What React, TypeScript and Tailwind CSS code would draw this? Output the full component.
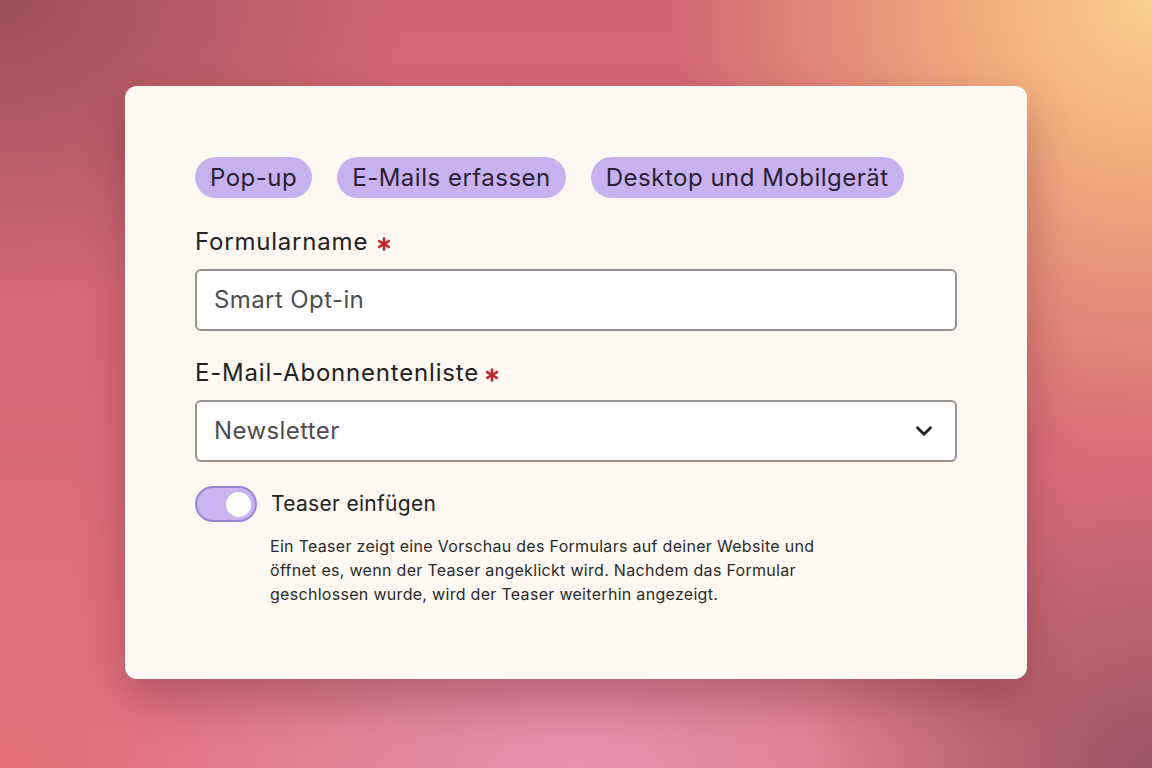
import { ChevronDown } from 'lucide-react';

const chips = ['Pop-up', 'E-Mails erfassen', 'Desktop und Mobilgerät'];

function Required() {
  return (
    <svg width="14" height="14" viewBox="0 0 14 14" className="text-[#c0262d] mt-[3px] shrink-0">
      <g stroke="currentColor" strokeWidth="2.6" strokeLinecap="round">
        <line x1="7" y1="1.5" x2="7" y2="12.5" />
        <line x1="2.2" y1="4.2" x2="11.8" y2="9.8" />
        <line x1="2.2" y1="9.8" x2="11.8" y2="4.2" />
      </g>
    </svg>
  );
}

export default function App() {
  return (
    <div
      className="w-full h-screen flex items-start justify-center pt-[86px] font-['Inter',sans-serif] bg-[radial-gradient(ellipse_42%_60%_at_100%_0%,#fbd08c_0%,#f0a87c_40%,transparent_100%),radial-gradient(ellipse_35%_40%_at_0%_0%,#9d4f58_0%,transparent_100%),radial-gradient(ellipse_30%_40%_at_100%_100%,#9b5468_0%,transparent_100%),radial-gradient(ellipse_45%_40%_at_50%_100%,#e592b0_0%,transparent_100%),radial-gradient(ellipse_35%_40%_at_0%_100%,#e46f79_0%,transparent_100%),linear-gradient(180deg,#cf6673_0%,#dc707a_100%)]"
    >
      <div className="w-[902px] h-[593px] rounded-[12px] bg-[#fdf8f2] shadow-[0_22px_44px_rgba(90,25,40,0.32)] px-[70px] pt-[71px]">
        {/* Tags */}
        <div className="flex gap-[25px]">
          {chips.map((c) => (
            <span
              key={c}
              className="h-[41px] px-[15px] rounded-full bg-[#c8b1ef] text-[#2a2233] text-[24px] flex items-center tracking-[0.5px]"
            >
              {c}
            </span>
          ))}
        </div>

        {/* Formularname */}
        <label className="mt-[29px] flex items-center gap-[9px] text-[24px] tracking-[0.8px] text-[#222] h-[30px]">
          Formularname <Required />
        </label>
        <div className="mt-[12px] h-[62px] rounded-[6px] border-2 border-[#979390] bg-white flex items-center px-[17px] text-[24px] tracking-[0.4px] text-[#4d4d4d]">
          Smart Opt-in
        </div>

        {/* Liste */}
        <label className="mt-[27px] flex items-center gap-[6px] text-[24px] tracking-[0.8px] text-[#222] h-[30px]">
          E-Mail-Abonnentenliste<Required />
        </label>
        <div className="mt-[12px] h-[62px] rounded-[6px] border-2 border-[#979390] bg-white flex items-center justify-between pl-[17px] pr-[18px] text-[24px] tracking-[0.4px] text-[#4d4d4d]">
          <span>Newsletter</span>
          <ChevronDown className="w-[26px] h-[26px] text-[#222]" strokeWidth={2.6} />
        </div>

        {/* Toggle */}
        <div className="mt-[24px] flex items-center gap-[14px]">
          <div className="w-[62px] h-[36px] rounded-full bg-[#c9b3f1] border-2 border-[#9b83d3] flex items-center justify-end pr-[4px]">
            <div className="w-[25px] h-[25px] rounded-full bg-white" />
          </div>
          <span className="text-[21px] tracking-[0.3px] text-[#222]">Teaser einfügen</span>
        </div>
        <p className="mt-[12px] ml-[75px] w-[560px] text-[16px] tracking-[0.3px] leading-[24px] text-[#2a2a2a]">
          Ein Teaser zeigt eine Vorschau des Formulars auf deiner Website und öffnet es, wenn der Teaser angeklickt
          wird. Nachdem das Formular geschlossen wurde, wird der Teaser weiterhin angezeigt.
        </p>
      </div>
    </div>
  );
}
